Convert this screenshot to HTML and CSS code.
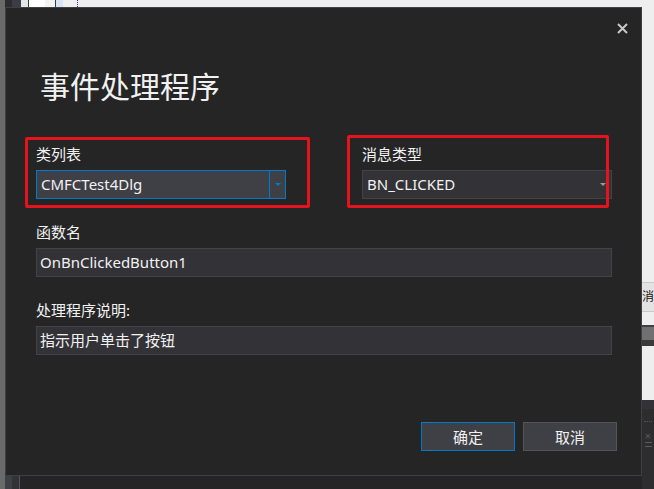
FILE: index.html
```html
<!DOCTYPE html>
<html lang="zh-CN">
  <head>
    <meta charset="UTF-8" />
    <meta name="viewport" content="width=device-width, initial-scale=1.0" />
    <title>事件处理程序</title>
    <link rel="stylesheet" href="styles.css">
  </head>
  <body>
    <div class="screen">
      <div class="edge-left"></div>

      <div class="top-strip">
        <span class="seg seg-dark"></span>
        <span class="seg seg-mid"></span>
        <span class="seg seg-pale"></span>
        <span class="seg seg-line"></span>
        <span class="seg seg-white"></span>
        <span class="seg seg-soft"></span>
        <span class="seg seg-line"></span>
        <span class="seg seg-blue"></span>
        <span class="seg seg-soft2"></span>
        <span class="seg seg-dots"></span>
      </div>

      <div class="dialog">
        <div class="titlebar">
          <button class="close" title="关闭">
            <svg width="11" height="11" viewBox="0 0 11 11">
              <path d="M1 1 L10 10 M10 1 L1 10" stroke="#c8c8c8" stroke-width="2" fill="none" />
            </svg>
          </button>
        </div>

        <h1 class="title">事件处理程序</h1>

        <div class="fields">
          <div class="row two">
            <div class="field">
              <label for="classList">类列表</label>
              <div class="combo active" id="classList">
                <span class="combo-text">CMFCTest4Dlg</span>
                <span class="combo-drop"><i class="arrow"></i></span>
              </div>
            </div>
            <div class="field">
              <label for="msgType">消息类型</label>
              <div class="combo" id="msgType">
                <span class="combo-text">BN_CLICKED</span>
                <span class="combo-drop"><i class="arrow"></i></span>
              </div>
            </div>
          </div>

          <div class="row">
            <div class="field">
              <label for="funcName">函数名</label>
              <div class="textbox" id="funcName">OnBnClickedButton1</div>
            </div>
          </div>

          <div class="row">
            <div class="field">
              <label for="handlerDesc">处理程序说明:</label>
              <div class="textbox" id="handlerDesc">指示用户单击了按钮</div>
            </div>
          </div>
        </div>

        <div class="footer">
          <button class="btn primary">确定</button>
          <button class="btn">取消</button>
        </div>

        <!-- red annotation frames drawn over the screenshot -->
        <div class="mark mark-class"></div>
        <div class="mark mark-msg"></div>
      </div>

      <div class="side">
        <div class="side-light side-a"></div>
        <div class="side-tab"><span>消</span></div>
        <div class="side-light side-b"></div>
        <div class="side-bar"></div>
        <div class="side-light side-c"></div>
        <div class="side-dark">
          <span class="dots"></span>
          <span class="mini-x">×</span>
          <span class="mini-eq"></span>
        </div>
      </div>

      <div class="bottom-strip">
        <span class="b1"></span>
        <span class="b2"></span>
      </div>
    </div>
  </body>
</html>
```

FILE: styles.css
```css
* {
  box-sizing: border-box;
}
body {
  margin: 0;
  width: 654px;
  height: 489px;
  overflow: hidden;
  background: #eeeeee;
  font-family: "Noto Sans", "Noto Sans CJK SC", sans-serif;
  color: #f1f1f1;
}
.screen {
  display: grid;
  grid-template-columns: 5px 637px 12px;
  grid-template-rows: 7px 469px 13px;
  height: 489px;
}
.edge-left {
  grid-column: 1;
  grid-row: 1 / 4;
  background: #6a6a6a;
}

/* strip of the IDE above the dialog */
.top-strip {
  grid-column: 2 / 4;
  grid-row: 1;
  display: flex;
  background: #eeeeee;
}
.seg {
  display: block;
  height: 100%;
}
.seg-dark { width: 7px; background: #2d2d30; }
.seg-mid { width: 9px; background: #3c3c44; }
.seg-pale { width: 7px; background: #e6e6e6; }
.seg-line { width: 1px; background: #3a3a3a; }
.seg-white { width: 16px; background: #ffffff; }
.seg-soft { width: 10px; background: #f3f3f3; }
.seg-blue { width: 7px; background: #d6e4f5; }
.seg-soft2 { width: 14px; background: #f0f0f0; }
.seg-dots { width: 1px; border-left: 1px dotted #2233dd; }

/* dialog */
.dialog {
  grid-column: 2;
  grid-row: 2;
  position: relative;
  display: flex;
  flex-direction: column;
  background: #252526;
  border: 1px solid #3f3f46;
}
.titlebar {
  display: flex;
  justify-content: flex-end;
  padding: 15px 13px 0 0;
}
.close {
  width: 11px;
  height: 11px;
  padding: 0;
  border: none;
  background: none;
  display: flex;
}
.title {
  margin: 38px 0 0 34px;
  font-size: 30px;
  line-height: 30px;
  font-weight: normal;
  color: #f1f1f1;
}
.fields {
  padding: 0 29px 0 30px;
  margin-top: 42px;
}
.row + .row {
  margin-top: 23px;
}
.row.two {
  display: flex;
  justify-content: space-between;
}
.two .field {
  width: 250px;
}
.field label {
  display: block;
  font-size: 15px;
  line-height: 20px;
  height: 20px;
  margin-bottom: 6px;
  color: #f1f1f1;
}
.combo,
.textbox {
  height: 29px;
  font-size: 15px;
  line-height: 27px;
  color: #f1f1f1;
  background: #333337;
  border: 1px solid #434346;
}
.textbox {
  padding-left: 3px;
}
.combo {
  display: flex;
}
.combo-text {
  flex: 1;
  padding-left: 4px;
}
.combo-drop {
  width: 16px;
  display: flex;
  align-items: center;
  justify-content: center;
}
.arrow {
  width: 0;
  height: 0;
  border-left: 3px solid transparent;
  border-right: 3px solid transparent;
  border-top: 3px solid #999999;
}
.combo.active {
  background: #3f3f46;
  border-color: #007acc;
}
.combo.active .combo-drop {
  border-left: 1px solid #007acc;
}
.combo.active .arrow {
  border-top-color: #007acc;
}

.footer {
  margin-top: auto;
  display: flex;
  justify-content: flex-end;
  gap: 8px;
  padding: 0 24px 24px 0;
}
.btn {
  width: 94px;
  height: 29px;
  font-family: "Noto Sans", "Noto Sans CJK SC", sans-serif;
  font-size: 15px;
  color: #f1f1f1;
  background: #3f3f46;
  border: 1px solid #555555;
  padding: 0;
}
.btn.primary {
  border-color: #007acc;
}

.mark {
  position: absolute;
  border: 3px solid #e3141d;
  border-radius: 2px;
}
.mark-class {
  left: 19px;
  top: 129px;
  width: 285px;
  height: 71px;
}
.mark-msg {
  left: 341px;
  top: 127px;
  width: 262px;
  height: 73px;
}

/* neighbouring IDE pieces on the right */
.side {
  grid-column: 3;
  grid-row: 2 / 4;
  display: flex;
  flex-direction: column;
}
.side-light { background: #eeeeee; }
.side-a { height: 275px; }
.side-tab {
  height: 30px;
  background: #e3e3e3;
  border-top: 1px solid #c8c8c8;
  border-bottom: 1px solid #c8c8c8;
  color: #111111;
  font-size: 12px;
  line-height: 27px;
}
.side-b { height: 13px; }
.side-bar {
  height: 21px;
  background: #707070;
  border-top: 2px solid #3f3f46;
  border-bottom: 6px solid #3a3a3a;
}
.side-c { height: 54px; }
.side-dark {
  flex: 1;
  background: #2d2d30;
  border-top: 9px solid #333337;
  display: flex;
  flex-direction: column;
  align-items: center;
  padding-top: 12px;
  color: #5a5a5a;
}
.dots {
  width: 8px;
  border-top: 1px dotted #555555;
}
.mini-x {
  font-size: 11px;
  line-height: 12px;
  margin-top: 8px;
}
.mini-eq {
  width: 7px;
  height: 5px;
  border-top: 1px solid #5a5a5a;
  border-bottom: 1px solid #5a5a5a;
}

.bottom-strip {
  grid-column: 2;
  grid-row: 3;
  display: flex;
  background: #252526;
}
.b1 {
  width: 7px;
  background: #3f3f46;
}
.b2 {
  width: 8px;
  background: #333337;
  border-right: 1px solid #555555;
}
```
